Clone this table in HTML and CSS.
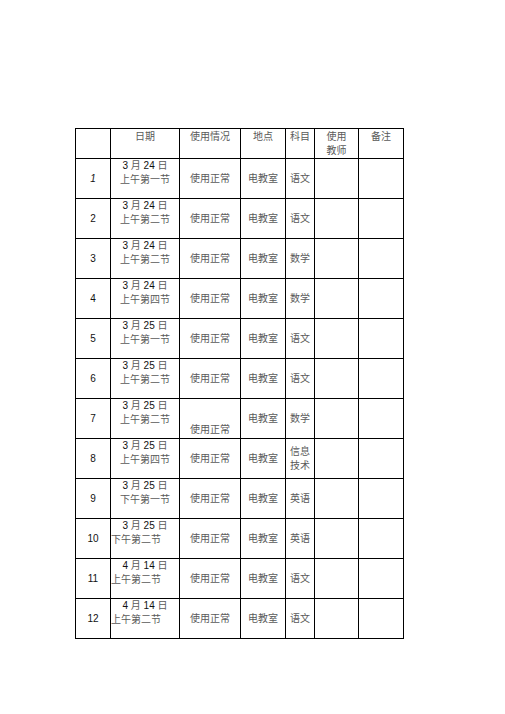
FILE: index.html
```html
<!DOCTYPE html>
<html lang="zh">
<head>
<meta charset="utf-8">
<title>电教室使用情况</title>
<link rel="stylesheet" href="styles.css">
</head>
<body>
<table class="log">
  <colgroup>
    <col class="c-no"><col class="c-date"><col class="c-use"><col class="c-place"><col class="c-subj"><col class="c-teacher"><col class="c-note">
  </colgroup>
  <thead>
    <tr class="head">
      <th></th><th>日期</th><th>使用情况</th><th>地点</th><th>科目</th><th>使用<br>教师</th><th>备注</th>
    </tr>
  </thead>
  <tbody>
    <tr><td class="no"><i>1</i></td><td class="date"><div class="d1"><span class="n">3</span> 月 <span class="n">24</span> 日</div><div>上午第一节</div></td><td>使用正常</td><td>电教室</td><td>语文</td><td></td><td></td></tr>
    <tr><td class="no">2</td><td class="date"><div class="d1"><span class="n">3</span> 月 <span class="n">24</span> 日</div><div>上午第二节</div></td><td>使用正常</td><td>电教室</td><td>语文</td><td></td><td></td></tr>
    <tr><td class="no">3</td><td class="date"><div class="d1"><span class="n">3</span> 月 <span class="n">24</span> 日</div><div>上午第二节</div></td><td>使用正常</td><td>电教室</td><td>数学</td><td></td><td></td></tr>
    <tr><td class="no">4</td><td class="date"><div class="d1"><span class="n">3</span> 月 <span class="n">24</span> 日</div><div>上午第四节</div></td><td>使用正常</td><td>电教室</td><td>数学</td><td></td><td></td></tr>
    <tr><td class="no">5</td><td class="date"><div class="d1"><span class="n">3</span> 月 <span class="n">25</span> 日</div><div>上午第一节</div></td><td>使用正常</td><td>电教室</td><td>语文</td><td></td><td></td></tr>
    <tr><td class="no">6</td><td class="date"><div class="d1"><span class="n">3</span> 月 <span class="n">25</span> 日</div><div>上午第二节</div></td><td>使用正常</td><td>电教室</td><td>语文</td><td></td><td></td></tr>
    <tr><td class="no">7</td><td class="date"><div class="d1"><span class="n">3</span> 月 <span class="n">25</span> 日</div><div>上午第二节</div></td><td class="bottom">使用正常</td><td>电教室</td><td>数学</td><td></td><td></td></tr>
    <tr><td class="no">8</td><td class="date"><div class="d1"><span class="n">3</span> 月 <span class="n">25</span> 日</div><div>上午第四节</div></td><td>使用正常</td><td>电教室</td><td>信息<br>技术</td><td></td><td></td></tr>
    <tr><td class="no">9</td><td class="date"><div class="d1"><span class="n">3</span> 月 <span class="n">25</span> 日</div><div>下午第一节</div></td><td>使用正常</td><td>电教室</td><td>英语</td><td></td><td></td></tr>
    <tr><td class="no">10</td><td class="date"><div class="d1"><span class="n">3</span> 月 <span class="n">25</span> 日</div><div class="left">下午第二节</div></td><td>使用正常</td><td>电教室</td><td>英语</td><td></td><td></td></tr>
    <tr><td class="no">11</td><td class="date"><div class="d1"><span class="n">4</span> 月 <span class="n">14</span> 日</div><div class="left">上午第二节</div></td><td>使用正常</td><td>电教室</td><td>语文</td><td></td><td></td></tr>
    <tr><td class="no">12</td><td class="date"><div class="d1"><span class="n">4</span> 月 <span class="n">14</span> 日</div><div class="left">上午第二节</div></td><td>使用正常</td><td>电教室</td><td>语文</td><td></td><td></td></tr>
  </tbody>
</table>
</body>
</html>
```

FILE: styles.css
```css
html, body {
  margin: 0;
  padding: 0;
  background: #ffffff;
}

body {
  padding: 128px 0 0 75px;
  font-family: "Liberation Sans", "Noto Sans CJK SC", sans-serif;
  font-size: 10px;
  line-height: 14px;
  color: #5a5a5a;
}

.log {
  border-collapse: collapse;
  table-layout: fixed;
  width: 328px;
}

.c-no { width: 35px; }
.c-date { width: 69px; }
.c-use { width: 61px; }
.c-place { width: 45px; }
.c-subj { width: 29px; }
.c-teacher { width: 44px; }
.c-note { width: 45px; }

.log th,
.log td {
  border: 1px solid #000000;
  padding: 0;
  text-align: center;
  vertical-align: middle;
  font-weight: normal;
}

.log th {
  vertical-align: top;
  padding-top: 1px;
}

.head {
  height: 28px;
}

.log tbody tr {
  height: 40px;
}

.no {
  color: #111111;
}

.no i {
  font-style: italic;
}

.n {
  color: #111111;
}

.log td.date {
  vertical-align: top;
}

.d1 {
  text-align: center;
}

.left {
  text-align: left;
}

.log td.bottom {
  vertical-align: bottom;
  padding-bottom: 1px;
}
```
